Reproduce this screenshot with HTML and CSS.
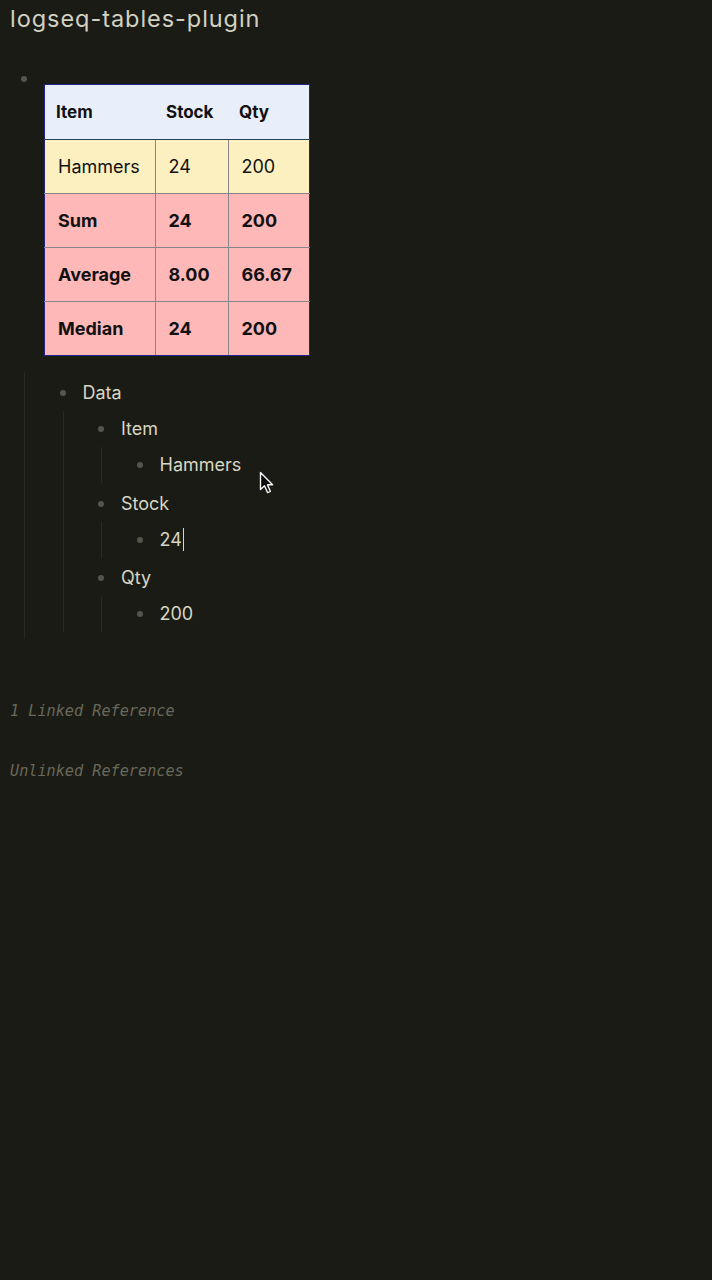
FILE: index.html
```html
<!DOCTYPE html>
<html>
<head>
<meta charset="utf-8">
<link rel="stylesheet" href="styles.css">
</head>
<body>
<div class="page">
  <h1 class="title">logseq-tables-plugin</h1>
  <div class="block root">
    <div class="row row-top">
      <div class="bw bw-top"><span class="dot"></span></div>
      <div class="content">
        <table class="tbl">
          <thead>
            <tr><th class="c1">Item</th><th class="c2">Stock</th><th class="c3">Qty</th></tr>
          </thead>
          <tbody>
            <tr class="data"><td>Hammers</td><td>24</td><td>200</td></tr>
            <tr class="calc"><td>Sum</td><td>24</td><td>200</td></tr>
            <tr class="calc"><td>Average</td><td>8.00</td><td>66.67</td></tr>
            <tr class="calc"><td>Median</td><td>24</td><td>200</td></tr>
          </tbody>
        </table>
      </div>
    </div>
    <div class="children first">
      <div class="block">
        <div class="row"><div class="bw"><span class="dot"></span></div><div class="content text">Data</div></div>
        <div class="children">
          <div class="block">
            <div class="row"><div class="bw"><span class="dot"></span></div><div class="content text">Item</div></div>
            <div class="children">
              <div class="block">
                <div class="row"><div class="bw"><span class="dot"></span></div><div class="content text">Hammers</div></div>
              </div>
            </div>
          </div>
          <div class="block">
            <div class="row"><div class="bw"><span class="dot"></span></div><div class="content text">Stock</div></div>
            <div class="children">
              <div class="block">
                <div class="row"><div class="bw"><span class="dot"></span></div><div class="content text">24<span class="caret"></span></div></div>
              </div>
            </div>
          </div>
          <div class="block">
            <div class="row"><div class="bw"><span class="dot"></span></div><div class="content text">Qty</div></div>
            <div class="children">
              <div class="block">
                <div class="row"><div class="bw"><span class="dot"></span></div><div class="content text">200</div></div>
              </div>
            </div>
          </div>
        </div>
      </div>
    </div>
  </div>
  <div class="refs">
    <div class="ref">1 Linked Reference</div>
    <div class="ref">Unlinked References</div>
  </div>
  <svg class="pointer" width="16" height="24" viewBox="0 0 16 24">
    <path d="M1.5 1.5 L1.5 18.5 L5.5 14.8 L8.6 21.6 L11.4 20.4 L8.4 13.8 L13.6 13.8 Z" fill="#0a0a0a" stroke="#f2f2f2" stroke-width="1.4" stroke-linejoin="round"/>
  </svg>
</div>
</body>
</html>
```
FILE: styles.css
```css
html, body {
  margin: 0;
  padding: 0;
  background: #1b1b15;
}
.page {
  position: relative;
  min-height: 1280px;
  font-family: Inter, "Noto Sans", sans-serif;
  color: #d7d7c3;
}
.title {
  margin: 0;
  padding: 4px 0 0 10px;
  font-size: 23.5px;
  font-weight: 400;
  line-height: 30px;
  letter-spacing: 0.95px;
  color: #d2d2c2;
}
.root {
  margin-top: 36px;
  padding-left: 14px;
}
.row {
  display: flex;
  align-items: center;
  height: 36px;
}
.row-top {
  height: auto;
  align-items: flex-start;
}
.bw {
  width: 20px;
  display: flex;
  justify-content: center;
  flex-shrink: 0;
}
.bw-top {
  padding-top: 6px;
}
.dot {
  width: 6px;
  height: 6px;
  border-radius: 50%;
  background: #55554b;
}
.content {
  margin-left: 10px;
}
.row-top .content {
  margin-top: 14px;
}
.text {
  font-size: 18px;
  line-height: 24px;
  position: relative;
}
.children {
  margin-left: 10px;
  border-left: 1px solid #2a2a22;
  padding-left: 27.5px;
  margin-bottom: 2.5px;
}
.children.first {
  margin-top: 16px;
  padding-top: 3px;
  padding-bottom: 4px;
  margin-bottom: 0;
}
.caret {
  display: inline-block;
  width: 1px;
  height: 23px;
  background: #d7d7c3;
  vertical-align: -5px;
  margin-left: 1px;
}
.tbl {
  border-collapse: collapse;
  border: 1.5px solid #23238a;
  color: #111;
  font-size: 18px;
}
.tbl th {
  background: #e9eefb;
  font-weight: 700;
  font-size: 17px;
  text-align: left;
  height: 54px;
  padding: 0 0 0 11px;
  border-bottom: 1.5px solid #23405a;
}
.tbl th.c1 { width: 99px; }
.tbl th.c2 { width: 62px; }
.tbl th.c3 { width: 70px; }
.tbl td {
  height: 53px;
  padding: 0 0 0 13px;
  border: 1px solid #8a8488;
}
.tbl tr.data td {
  background: #fcf0c0;
}
.tbl tr.calc td {
  background: #ffb8b8;
  font-weight: 700;
}
.tbl td:first-child { border-left: 1.5px solid #23238a; }
.tbl td:last-child { border-right: 1.5px solid #23238a; }
.tbl tr:last-child td { border-bottom: 1.5px solid #23238a; }
.refs {
  margin-top: 62px;
  padding-left: 10px;
}
.ref {
  font-family: "DejaVu Sans Mono", monospace;
  font-style: italic;
  font-size: 15.2px;
  line-height: 20px;
  color: #68685a;
  margin-bottom: 40px;
}
.pointer {
  position: absolute;
  left: 259px;
  top: 471px;
}
```
